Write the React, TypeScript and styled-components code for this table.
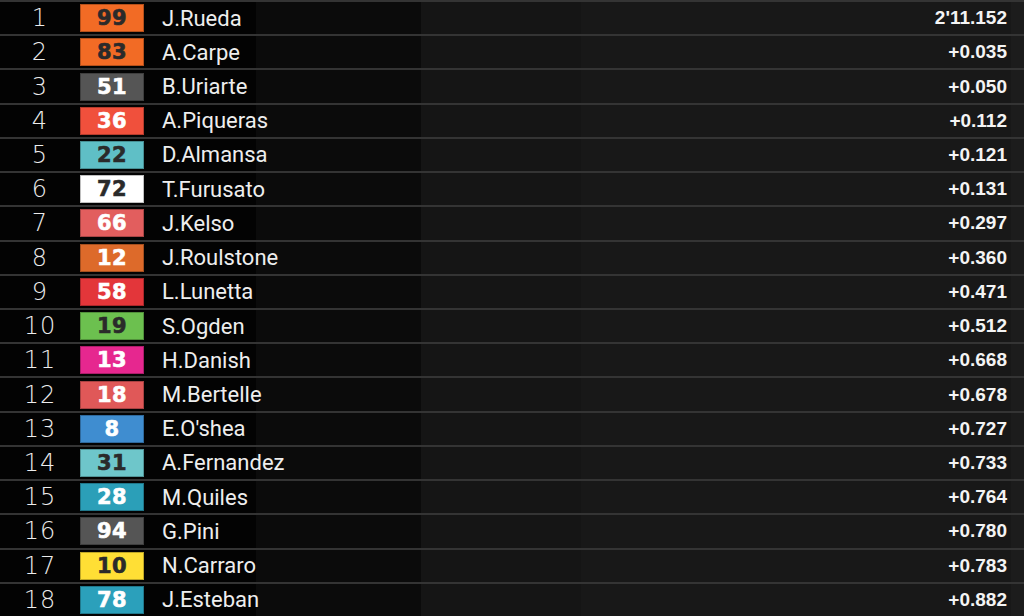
import React from "react";
import styled, { createGlobalStyle } from "styled-components";

const Global = createGlobalStyle`
  html, body { margin: 0; padding: 0; background: #030303; }
  body { width: 1024px; height: 616px; overflow: hidden; }
`;

type Rider = { pos: number; num: string; name: string; time: string; bg: string; dark?: boolean };

const riders: Rider[] = [
  { pos: 1, num: "99", name: "J.Rueda", time: "2'11.152", bg: "#f26b25", dark: true },
  { pos: 2, num: "83", name: "A.Carpe", time: "+0.035", bg: "#f26b25", dark: true },
  { pos: 3, num: "51", name: "B.Uriarte", time: "+0.050", bg: "#555555" },
  { pos: 4, num: "36", name: "A.Piqueras", time: "+0.112", bg: "#f0503c" },
  { pos: 5, num: "22", name: "D.Almansa", time: "+0.121", bg: "#5fbfc6", dark: true },
  { pos: 6, num: "72", name: "T.Furusato", time: "+0.131", bg: "#ffffff", dark: true },
  { pos: 7, num: "66", name: "J.Kelso", time: "+0.297", bg: "#e25e5e" },
  { pos: 8, num: "12", name: "J.Roulstone", time: "+0.360", bg: "#dd6a2a" },
  { pos: 9, num: "58", name: "L.Lunetta", time: "+0.471", bg: "#e3363a" },
  { pos: 10, num: "19", name: "S.Ogden", time: "+0.512", bg: "#6cc04f", dark: true },
  { pos: 11, num: "13", name: "H.Danish", time: "+0.668", bg: "#e6278f" },
  { pos: 12, num: "18", name: "M.Bertelle", time: "+0.678", bg: "#e05858" },
  { pos: 13, num: "8", name: "E.O'shea", time: "+0.727", bg: "#3f8dd0" },
  { pos: 14, num: "31", name: "A.Fernandez", time: "+0.733", bg: "#6ec6ca", dark: true },
  { pos: 15, num: "28", name: "M.Quiles", time: "+0.764", bg: "#2b9fb8" },
  { pos: 16, num: "94", name: "G.Pini", time: "+0.780", bg: "#555555" },
  { pos: 17, num: "10", name: "N.Carraro", time: "+0.783", bg: "#ffdf35", dark: true },
  { pos: 18, num: "78", name: "J.Esteban", time: "+0.882", bg: "#2ba0bb" },
];

const Board = styled.div`
  width: 1024px;
  height: 616px;
  display: grid;
  grid-template-rows: repeat(18, 1fr);
`;

const Row = styled.div`
  display: grid;
  grid-template-columns: 80px 64px 1fr 430px;
  align-items: center;
  border-top: 2px solid #343434;
  background: linear-gradient(
    to right,
    #030303 0 256px,
    #0b0b0b 256px 421px,
    #151515 421px 581px,
    #181818 581px 1011px,
    #1c1c1c 1011px
  );
`;

const Pos = styled.div`
  text-align: center;
  color: #ececec;
  font-family: "DejaVu Sans", "Lato", sans-serif;
  font-weight: 200;
  font-size: 24px;
  letter-spacing: 1px;
`;

const Badge = styled.div<{ $bg: string; $dark?: boolean }>`
  height: 28px;
  background: ${(p) => p.$bg};
  color: ${(p) => (p.$dark ? "#2a2a2a" : "#ffffff")};
  display: flex;
  align-items: center;
  justify-content: center;
  font-family: "DejaVu Sans", sans-serif;
  font-weight: 900;
  font-size: 21px;
  letter-spacing: 0.5px;
  -webkit-text-stroke: 0.6px currentColor;
  box-shadow: inset 0 0 0 1px rgba(0, 0, 0, 0.25);
`;

const Name = styled.div`
  padding-left: 18px;
  color: #eeeeee;
  font-family: "Roboto", "Liberation Sans", sans-serif;
  font-weight: 400;
  font-size: 22px;
  white-space: nowrap;
`;

const Time = styled.div`
  text-align: right;
  padding-right: 17px;
  color: #f4f4f4;
  font-family: "Liberation Sans", Arial, sans-serif;
  font-weight: 700;
  font-size: 19px;
`;

export default function App() {
  return (
    <>
      <Global />
      <Board>
        {riders.map((r) => (
          <Row key={r.pos}>
            <Pos>{r.pos}</Pos>
            <Badge $bg={r.bg} $dark={r.dark}>
              {r.num}
            </Badge>
            <Name>{r.name}</Name>
            <Time>{r.time}</Time>
          </Row>
        ))}
      </Board>
    </>
  );
}
